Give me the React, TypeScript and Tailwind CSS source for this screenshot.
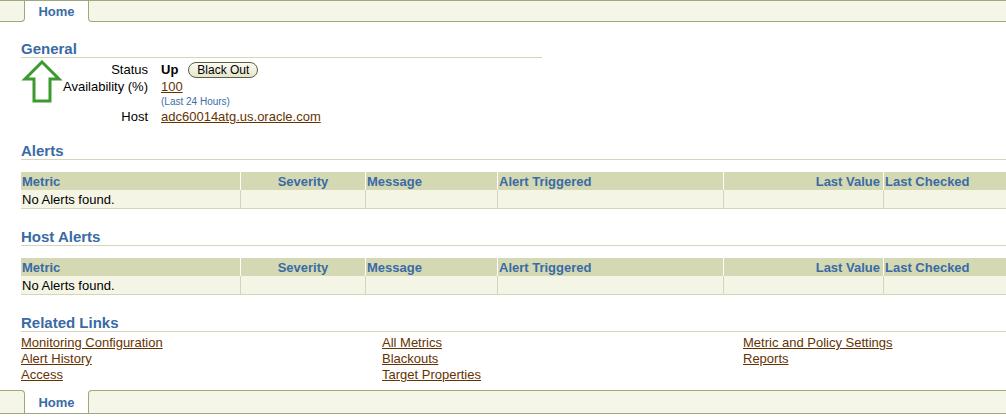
const font = { fontFamily: '"Liberation Sans", Arial, sans-serif' };

const cols = "grid grid-cols-[219px_125px_132px_226px_160px_1fr]";

function TabBar({ bottom }: { bottom?: boolean }) {
  if (bottom) {
    return (
      <div className="flex h-[24px] border-b border-[#a0a77b]">
        <div className="w-[25px] bg-[#f6f6e8] border-t border-r border-[#a0a77b] rounded-tr-[4px]" />
        <div className="w-[63px] bg-white flex items-center justify-center pt-[2px] text-[13px] font-bold text-[#3a6ba6]">
          Home
        </div>
        <div className="flex-1 bg-[#f6f6e8] border-t border-l border-[#a0a77b] rounded-tl-[4px]" />
      </div>
    );
  }
  return (
    <div className="flex h-[22px] border-t border-[#a0a77b]">
      <div className="w-[25px] bg-[#f6f6e8] border-b border-r border-[#a0a77b] rounded-br-[4px]" />
      <div className="w-[63px] bg-white flex items-center justify-center text-[13px] font-bold text-[#3a6ba6]">
        Home
      </div>
      <div className="flex-1 bg-[#f6f6e8] border-b border-l border-[#a0a77b] rounded-bl-[4px]" />
    </div>
  );
}

function Heading({ children, className = "" }: { children: string; className?: string }) {
  return (
    <h2
      className={`h-[20px] pt-[2px] leading-[17px] border-b border-[#d3d6b8] text-[15px] font-bold text-[#3a6aa5] ${className}`}
    >
      {children}
    </h2>
  );
}

function AlertTable() {
  const head = "h-[18px] pt-[1px] leading-[17px] px-[1px] text-[13px] font-bold text-[#3a6aa5] whitespace-nowrap";
  const cell = "h-[19px] border-b border-[#d3d6b8]";
  return (
    <div className="mt-[12px]">
      <div className={`${cols} bg-[#d4d9b3]`}>
        <div className={head}>Metric</div>
        <div className={`${head} border-l border-white text-center`}>Severity</div>
        <div className={`${head} border-l border-white`}>Message</div>
        <div className={`${head} border-l border-white`}>Alert Triggered</div>
        <div className={`${head} border-l border-white text-right pr-[3px]`}>Last Value</div>
        <div className={`${head} border-l border-white`}>Last Checked</div>
      </div>
      <div className={`${cols} bg-[#f5f5e6]`}>
        <div className={`${cell} pt-[1px] leading-[17px] px-[1px] text-[13px] text-black`}>No Alerts found.</div>
        <div className={`${cell} border-l border-l-[#d3d6b8]`} />
        <div className={`${cell} border-l border-l-[#d3d6b8]`} />
        <div className={`${cell} border-l border-l-[#d3d6b8]`} />
        <div className={`${cell} border-l border-l-[#d3d6b8]`} />
        <div className={`${cell} border-l border-l-[#d3d6b8]`} />
      </div>
    </div>
  );
}

function Link({ children }: { children: string }) {
  return (
    <a href="#" className="text-[#663300] underline underline-offset-[1px]">
      {children}
    </a>
  );
}

export default function App() {
  const links = [
    ["Monitoring Configuration", "Alert History", "Access"],
    ["All Metrics", "Blackouts", "Target Properties"],
    ["Metric and Policy Settings", "Reports"],
  ];
  return (
    <div className="w-[1006px] h-[420px] bg-white text-[13px] text-black overflow-hidden" style={font}>
      <TabBar />

      <div className="pl-[21px]">
        {/* General */}
        <Heading className="mt-[16px] w-[521px]">General</Heading>
        <div className="relative mt-[3px]">
          <svg className="absolute left-0 top-[-1px]" width="42" height="44" viewBox="0 0 42 44">
            <polygon
              points="21,2 38,19 29,19 29,41 13,41 13,19 4,19"
              fill="none"
              stroke="#3c9a2e"
              strokeWidth="3"
              strokeLinejoin="miter"
            />
          </svg>
          <div className="grid grid-cols-[127px_1fr] gap-x-[13px]">
            <div className="h-[18px] leading-[18px] text-right">Status</div>
            <div className="h-[18px] flex items-center">
              <span className="font-bold">Up</span>
              <button className="ml-[10px] h-[16px] w-[70px] rounded-full border border-[#5e5e45] bg-gradient-to-b from-[#fbfbf2] to-[#e6e6cc] text-[12px] leading-[14px] text-black">
                Black Out
              </button>
            </div>
            <div className="h-[16px] leading-[16px] text-right">Availability (%)</div>
            <div className="h-[16px] leading-[16px]">
              <Link>100</Link>
            </div>
            <div className="h-[14px]" />
            <div className="h-[14px] leading-[14px] text-[10px] text-[#3a6ea8]">(Last 24 Hours)</div>
            <div className="h-[16px] leading-[16px] text-right">Host</div>
            <div className="h-[16px] leading-[16px]">
              <Link>adc60014atg.us.oracle.com</Link>
            </div>
          </div>
        </div>

        {/* Alerts */}
        <Heading className="mt-[15px]">Alerts</Heading>
        <AlertTable />

        {/* Host Alerts */}
        <Heading className="mt-[17px]">Host Alerts</Heading>
        <AlertTable />

        {/* Related Links */}
        <Heading className="mt-[17px]">Related Links</Heading>
        <div className="mt-[3px] grid grid-cols-[361px_361px_1fr]">
          {links.map((col, i) => (
            <div key={i} className="flex flex-col">
              {col.map((l) => (
                <div key={l} className="h-[16px] leading-[16px]">
                  <Link>{l}</Link>
                </div>
              ))}
            </div>
          ))}
        </div>
      </div>

      <div className="mt-[7px]">
        <TabBar bottom />
      </div>
    </div>
  );
}
